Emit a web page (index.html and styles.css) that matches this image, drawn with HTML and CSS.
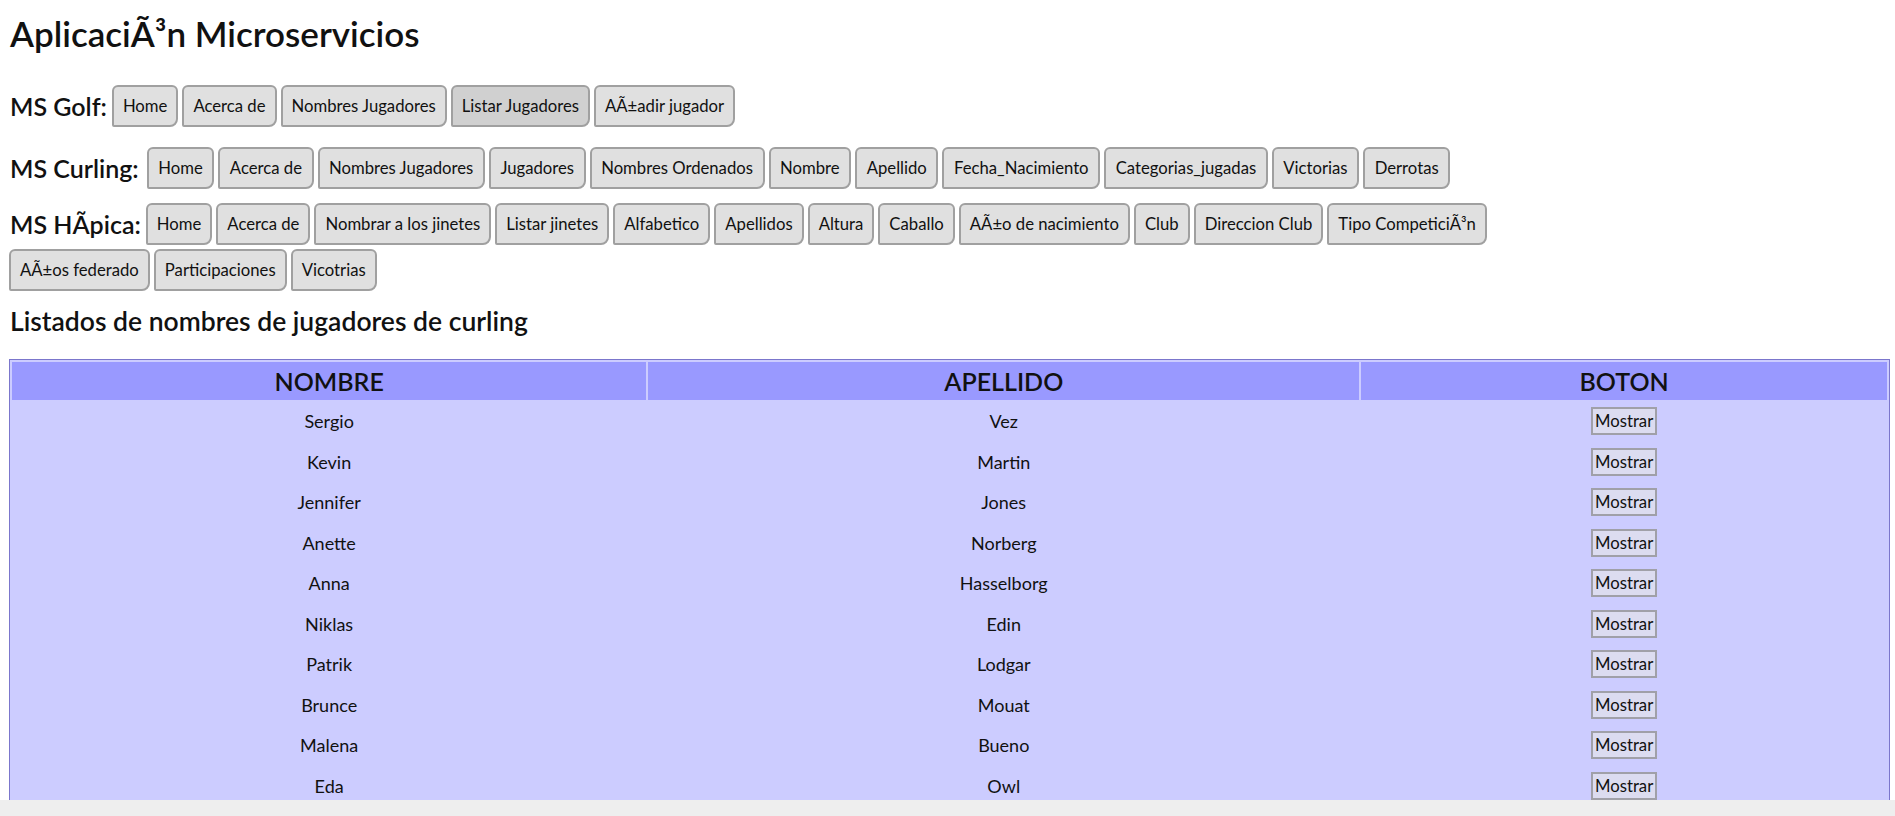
FILE: index.html
```html
<!DOCTYPE html>
<html lang="es">
<head>
<meta charset="utf-8">
<title>AplicaciÃ³n Microservicios</title>
<link rel="stylesheet" href="styles.css">
</head>
<body>
<h1 class="title">AplicaciÃ³n Microservicios</h1>

<div class="nav nav-golf">
  <span class="nav-label">MS Golf:</span>
  <a class="nav-btn">Home</a>
  <a class="nav-btn">Acerca de</a>
  <a class="nav-btn">Nombres Jugadores</a>
  <a class="nav-btn is-active">Listar Jugadores</a>
  <a class="nav-btn">AÃ±adir jugador</a>
</div>

<div class="nav nav-curling">
  <span class="nav-label">MS Curling:</span>
  <a class="nav-btn">Home</a>
  <a class="nav-btn">Acerca de</a>
  <a class="nav-btn">Nombres Jugadores</a>
  <a class="nav-btn">Jugadores</a>
  <a class="nav-btn">Nombres Ordenados</a>
  <a class="nav-btn">Nombre</a>
  <a class="nav-btn">Apellido</a>
  <a class="nav-btn">Fecha_Nacimiento</a>
  <a class="nav-btn">Categorias_jugadas</a>
  <a class="nav-btn">Victorias</a>
  <a class="nav-btn">Derrotas</a>
</div>

<div class="nav nav-hipica">
  <span class="nav-label">MS HÃpica:</span>
  <a class="nav-btn">Home</a>
  <a class="nav-btn">Acerca de</a>
  <a class="nav-btn">Nombrar a los jinetes</a>
  <a class="nav-btn">Listar jinetes</a>
  <a class="nav-btn">Alfabetico</a>
  <a class="nav-btn">Apellidos</a>
  <a class="nav-btn">Altura</a>
  <a class="nav-btn">Caballo</a>
  <a class="nav-btn">AÃ±o de nacimiento</a>
  <a class="nav-btn">Club</a>
  <a class="nav-btn">Direccion Club</a>
  <a class="nav-btn">Tipo CompeticiÃ³n</a>
  <span class="nav-break"></span>
  <a class="nav-btn">AÃ±os federado</a>
  <a class="nav-btn">Participaciones</a>
  <a class="nav-btn">Vicotrias</a>
</div>

<h3 class="subtitle">Listados de nombres de jugadores de curling</h3>

<table class="players">
  <thead>
    <tr>
      <th class="col-nombre">NOMBRE</th>
      <th class="col-apellido">APELLIDO</th>
      <th class="col-boton">BOTON</th>
    </tr>
  </thead>
  <tbody>
    <tr><td>Sergio</td><td>Vez</td><td><button class="show-btn">Mostrar</button></td></tr>
    <tr><td>Kevin</td><td>Martin</td><td><button class="show-btn">Mostrar</button></td></tr>
    <tr><td>Jennifer</td><td>Jones</td><td><button class="show-btn">Mostrar</button></td></tr>
    <tr><td>Anette</td><td>Norberg</td><td><button class="show-btn">Mostrar</button></td></tr>
    <tr><td>Anna</td><td>Hasselborg</td><td><button class="show-btn">Mostrar</button></td></tr>
    <tr><td>Niklas</td><td>Edin</td><td><button class="show-btn">Mostrar</button></td></tr>
    <tr><td>Patrik</td><td>Lodgar</td><td><button class="show-btn">Mostrar</button></td></tr>
    <tr><td>Brunce</td><td>Mouat</td><td><button class="show-btn">Mostrar</button></td></tr>
    <tr><td>Malena</td><td>Bueno</td><td><button class="show-btn">Mostrar</button></td></tr>
    <tr><td>Eda</td><td>Owl</td><td><button class="show-btn">Mostrar</button></td></tr>
  </tbody>
</table>

<div class="hscroll"></div>
</body>
</html>
```

FILE: styles.css
```css
html {
  overflow: hidden;
  background: #fff;
}

body {
  margin: 0 5px 0 9px;
  font-family: Lato, "Open Sans", sans-serif;
  color: #111;
}

.title {
  margin: 9px 0 0 1px;
  font-size: 35px;
  line-height: 48px;
  font-weight: 600;
}

.nav {
  display: flex;
  flex-wrap: wrap;
  align-items: center;
  column-gap: 4px;
  row-gap: 2px;
}

.nav-break {
  flex-basis: 100%;
  height: 0;
}

.nav-golf {
  margin-top: 28px;
}

.nav-curling {
  margin-top: 20px;
}

.nav-hipica {
  margin-top: 14px;
}

.nav-label {
  font-size: 25px;
  font-weight: 600;
  margin: 0 1px 0 1px;
}

.nav-curling .nav-label {
  margin-right: 4px;
}

.nav-btn {
  display: block;
  box-sizing: border-box;
  height: 42px;
  padding: 0 9px;
  line-height: 38px;
  font-size: 16.7px;
  color: #111;
  background: #e0e0e0;
  border: 2px solid #a0a0a0;
  border-radius: 6px 6px 8px 2px;
}

.nav-curling .nav-btn {
  padding: 0 9.55px;
}

.nav-btn.is-active {
  background: #d0d0d0;
}

.subtitle {
  margin: 14px 0 0 1px;
  font-size: 26.5px;
  line-height: 32px;
  font-weight: 600;
}

.players {
  width: 100%;
  margin-top: 22px;
  border: 1px solid #7b76cc;
  border-spacing: 2px;
  background: #ccccff;
}

.players th {
  background: #9999ff;
  font-size: 25px;
  font-weight: 600;
  line-height: 36px;
  padding: 1px;
}

.col-nombre { width: 33.9%; }
.col-apellido { width: 38%; }
.col-boton { width: 28.1%; }

.players td {
  text-align: center;
  font-size: 18px;
  padding: 5px 1px;
  height: 28.5px;
}

.show-btn {
  font-family: Lato, "Open Sans", sans-serif;
  font-size: 16.7px;
  line-height: 20px;
  height: 28px;
  padding: 1px 2px;
  color: #111;
  background: #dcdcf0;
  border: 2px solid #a0a0a8;
  border-radius: 0;
  vertical-align: middle;
}

.hscroll {
  position: fixed;
  left: 0;
  right: 0;
  bottom: 0;
  height: 16px;
  background: #eeeeee;
}
```
